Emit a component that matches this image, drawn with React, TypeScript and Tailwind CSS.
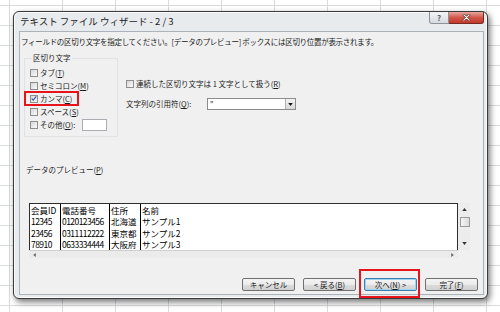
const jp = "font-['Noto_Sans_CJK_JP','Noto_Sans',sans-serif]";

function CheckBox({ checked = false }: { checked?: boolean }) {
  return (
    <span className="flex h-[8px] w-[8px] shrink-0 items-center justify-center border border-[#8f8f8f] bg-[linear-gradient(135deg,#d6d6d6,#fbfbfb)]">
      {checked && (
        <svg viewBox="0 0 8 8" className="h-[7px] w-[7px]">
          <path d="M1 4.3 L3 6.3 L7 1.2" fill="none" stroke="#2a4f9e" strokeWidth="1.4" />
        </svg>
      )}
    </span>
  );
}

function Label({ text, accel }: { text: string; accel: string }) {
  const i = text.lastIndexOf(accel);
  return (
    <span className="whitespace-nowrap">
      {text.slice(0, i)}
      <span className="underline underline-offset-1">{accel}</span>
      {text.slice(i + 1)}
    </span>
  );
}

const delimiters = [
  { text: "タブ(T)", accel: "T" },
  { text: "セミコロン(M)", accel: "M" },
  { text: "カンマ(C)", accel: "C", checked: true, marked: true },
  { text: "スペース(S)", accel: "S" },
  { text: "その他(O):", accel: "O", input: true },
];

const columns = [
  { w: "w-[31px]", cells: ["会員ID", "12345", "23456", "78910"] },
  { w: "w-[49px]", cells: ["電話番号", "0120123456", "0311112222", "0633334444"] },
  { w: "w-[31px]", cells: ["住所", "北海道", "東京都", "大阪府"] },
  { w: "w-[60px] border-r-0", cells: ["名前", "サンプル1", "サンプル2", "サンプル3"] },
];

function Button({ children, focused = false }: { children: React.ReactNode; focused?: boolean }) {
  return (
    <div
      className={`flex h-[13px] w-[53px] items-center justify-center rounded-[2px] border bg-[linear-gradient(to_bottom,#f4f4f4_0%,#ebebeb_50%,#dddddd_51%,#d0d0d0_100%)] text-[7.5px] leading-none text-[#1a1a1a] ${
        focused ? "border-[#3c7fb1] shadow-[inset_0_0_0_1px_#9ed3f2]" : "border-[#707070]"
      }`}
    >
      {children}
    </div>
  );
}

export default function App() {
  return (
    <div
      className={`h-[312px] w-[500px] overflow-hidden bg-white bg-[linear-gradient(to_right,#d8dadc_1px,transparent_1px),linear-gradient(to_bottom,#d8dadc_1px,transparent_1px)] bg-[size:53px_20px] bg-[position:9px_5px] pl-[13px] pt-[11px] ${jp}`}
    >
      <div className="flex h-[288px] w-[475px] flex-col rounded-[6px] border border-[#3a3a3a] bg-[#e8ebee] pb-[3px] pl-[5px] pr-[3px] shadow-[2px_3px_6px_rgba(0,0,0,0.55),inset_0_0_0_1px_#fbfbfb]">
        <div className="flex h-[19px] items-start">
          <span className="self-center pl-[1px] text-[9.5px] leading-none text-[#1c1c1c]">
            テキスト ファイル ウィザード - 2 / 3
          </span>
          <div className="ml-auto flex">
            <div className="flex h-[12px] w-[20px] items-center justify-center rounded-bl-[3px] border border-t-0 border-[#8a939c] bg-[linear-gradient(to_bottom,#f3f4f6,#d6dbe0)] text-[8px] font-bold leading-none text-[#56606b]">
              ?
            </div>
            <div className="flex h-[12px] w-[35px] items-center justify-center rounded-br-[3px] border border-l-0 border-t-0 border-[#7a2a22] bg-[linear-gradient(to_bottom,#e8a79e,#d2584a_50%,#c0392b)]">
              <svg viewBox="0 0 10 8" className="h-[7px] w-[9px]">
                <path d="M2 1 L8 7 M8 1 L2 7" stroke="#5a1a12" strokeWidth="2.6" strokeLinecap="round" />
                <path d="M2 1 L8 7 M8 1 L2 7" stroke="#ffffff" strokeWidth="1.5" strokeLinecap="round" />
              </svg>
            </div>
          </div>
        </div>

        <div className="flex flex-1 flex-col border border-[#aab2ba] bg-[#f0f0f0] text-[7.5px] leading-[10px] text-[#1a1a1a]">
          <p className="whitespace-nowrap pl-[1px] pt-[5px] tracking-[-0.3px]">
            フィールドの区切り文字を指定してください。[データのプレビュー] ボックスには区切り位置が表示されます。
          </p>

          <div className="ml-[4px] mt-[6px] flex">
            <fieldset className="w-[94px] border border-[#e0e3e6] pb-[5px] pl-[5px]">
              <legend className="ml-[2px] px-[1px] leading-[10px]">区切り文字</legend>
              <div className="flex flex-col pt-[3px]">
                {delimiters.map((d) => (
                  <div key={d.text} className="relative flex h-[13px] items-center gap-[2px]">
                    <CheckBox checked={d.checked} />
                    <Label text={d.text} accel={d.accel} />
                    {d.input && <span className="ml-[5px] h-[12px] w-[25px] border border-[#abadb3] bg-white" />}
                    {d.marked && (
                      <span className="absolute left-[-6px] top-[-1px] h-[15px] w-[55px] border-2 border-[#e8141b]" />
                    )}
                  </div>
                ))}
              </div>
            </fieldset>

            <div className="ml-[8px] flex flex-col pt-[25px]">
              <div className="flex h-[12px] items-center gap-[2px]">
                <CheckBox />
                <Label text="連続した区切り文字は 1 文字として扱う(R)" accel="R" />
              </div>
              <div className="mt-[8px] flex h-[12px] items-center">
                <span className="w-[81px]">
                  <Label text="文字列の引用符(Q):" accel="Q" />
                </span>
                <div className="flex h-[12px] w-[89px] items-center border border-[#8c8c8c] bg-white">
                  <span className="flex-1 pl-[2px] leading-none">"</span>
                  <span className="flex h-full w-[10px] items-center justify-center border-l border-[#b0b0b0] bg-[linear-gradient(to_bottom,#f4f4f4,#d8d8d8)]">
                    <svg viewBox="0 0 6 4" className="h-[3px] w-[5px]">
                      <path d="M0 0 H6 L3 4 Z" fill="#111" />
                    </svg>
                  </span>
                </div>
              </div>
            </div>
          </div>

          <p className="ml-[6px] mt-[28px] whitespace-nowrap">
            <Label text="データのプレビュー(P)" accel="P" />
          </p>

          <div className="ml-[9px] mt-[28px] flex w-[441px] flex-col">
            <div className="flex h-[47px]">
              <div className="flex flex-1 border-l border-r border-t border-[#2e2e2e] bg-white text-[8.5px] leading-[11.5px] text-black">
                {columns.map((c, i) => (
                  <div key={i} className={`${c.w} flex flex-col border-r border-black pl-[1px] pt-[0.5px]`}>
                    {c.cells.map((cell) => (
                      <span key={cell} className={`whitespace-nowrap ${/^\d+$/.test(cell) ? "tracking-[-0.55px]" : ""}`}>
                        {cell}
                      </span>
                    ))}
                  </div>
                ))}
              </div>
              <div className="flex w-[12px] flex-col items-center bg-[#ececec]">
                <svg viewBox="0 0 6 4" className="mt-[5px] h-[3px] w-[5px]">
                  <path d="M0 4 H6 L3 0 Z" fill="#333" />
                </svg>
                <span className="ml-[2px] mt-[6px] h-[10px] w-[10px] border border-[#9a9a9a] bg-[linear-gradient(to_right,#f4f4f4,#dcdcdc)]" />
                <svg viewBox="0 0 6 4" className="mt-auto mb-[5px] h-[3px] w-[5px]">
                  <path d="M0 0 H6 L3 4 Z" fill="#333" />
                </svg>
              </div>
            </div>
            <div className="mr-[12px] flex h-[8px] items-center justify-between border-t border-[#cfcfcf] bg-[#ebebeb] px-[4px]">
              <svg viewBox="0 0 4 6" className="h-[4px] w-[3px]">
                <path d="M4 0 V6 L0 3 Z" fill="#666" />
              </svg>
              <svg viewBox="0 0 4 6" className="h-[4px] w-[3px]">
                <path d="M0 0 V6 L4 3 Z" fill="#666" />
              </svg>
            </div>
          </div>

          <div className="mt-auto flex justify-end gap-[8px] pb-[3px] pr-[5px]">
            <Button>キャンセル</Button>
            <Button>
              &lt;&nbsp;<Label text="戻る(B)" accel="B" />
            </Button>
            <div className="relative">
              <Button focused>
                <Label text="次へ(N)" accel="N" />
                &nbsp;&gt;
              </Button>
              <span className="absolute left-[-5px] top-[-9px] h-[29px] w-[61px] border-2 border-[#e8141b]" />
            </div>
            <Button>
              <Label text="完了(F)" accel="F" />
            </Button>
          </div>
        </div>
      </div>
    </div>
  );
}
